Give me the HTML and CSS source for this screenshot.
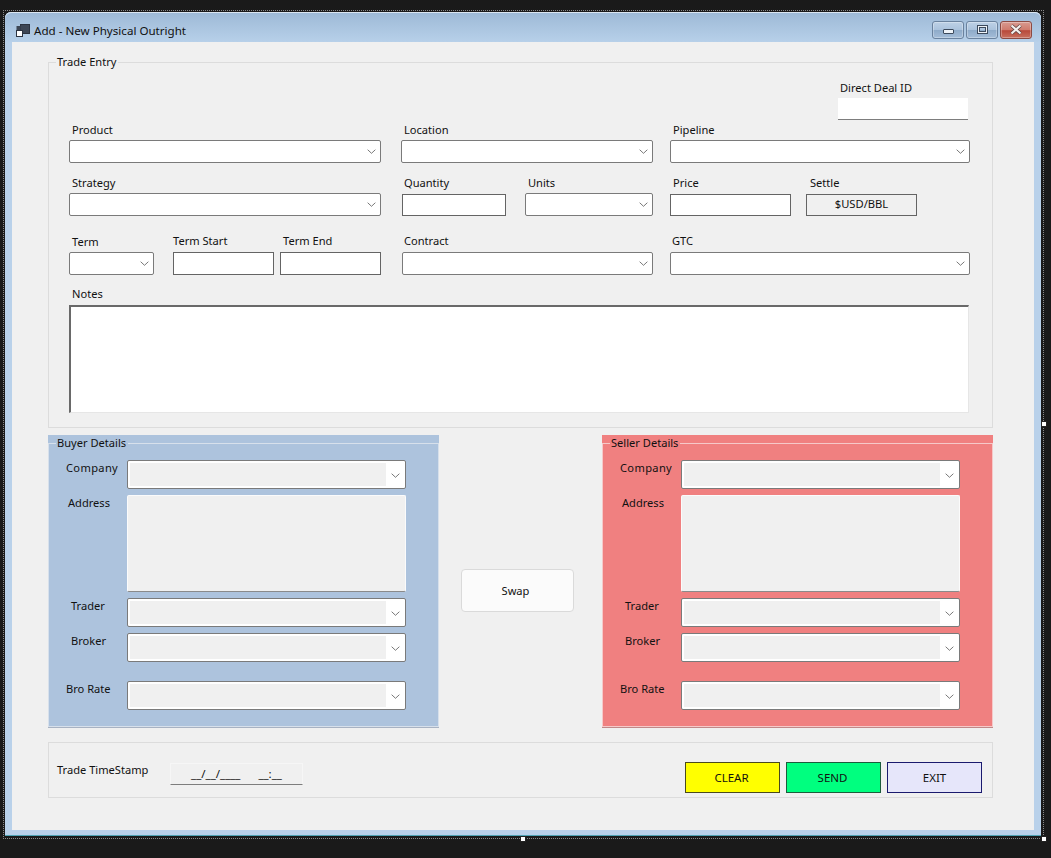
FILE: index.html
```html
<!DOCTYPE html>
<html lang="en">
<head>
<meta charset="utf-8">
<title>Add - New Physical Outright</title>
<link rel="stylesheet" href="styles.css">
</head>
<body>
<svg class="defs" width="0" height="0" aria-hidden="true">
  <symbol id="chev" viewBox="0 0 10 5"><path d="M0.7 0.5 L5 4.5 L9.3 0.5" fill="none" stroke="#6a6a6a" stroke-width="1"/></symbol>
</svg>
<div class="selection">
  <span class="handle handle-right"></span>
  <span class="handle handle-bottom"></span>
  <span class="handle handle-corner"></span>
  <div class="window">
    <header class="titlebar">
      <svg class="app-icon" width="14" height="13" viewBox="0 0 14 13">
        <rect x="4.5" y="0.5" width="9" height="9" fill="#3d4654" stroke="#2c3340"/>
        <rect x="0.5" y="6.5" width="6" height="6" fill="#fff" stroke="#2c3340"/>
        <rect x="0.5" y="2" width="4" height="4" fill="#3d4654"/>
      </svg>
      <span class="title">Add - New Physical Outright</span>
      <div class="caption-buttons">
        <div class="cap cap-min"><span class="glyph-min"></span></div>
        <div class="cap cap-max"><span class="glyph-max"></span></div>
        <div class="cap cap-close">
          <svg width="16" height="11" viewBox="0 0 16 11"><path d="M3.5 1.5 L12.5 9.5 M12.5 1.5 L3.5 9.5" stroke="#5a4040" stroke-width="3.6"/><path d="M3.5 1.5 L12.5 9.5 M12.5 1.5 L3.5 9.5" stroke="#f4f0ee" stroke-width="2.2"/></svg>
        </div>
      </div>
    </header>
    <main class="client">
      <section class="group trade">
        <span class="legend">Trade Entry</span>
        <div class="row row-direct">
          <div class="field w-130"><label class="lbl lbl-2">Direct Deal ID</label><input class="input input-flat" type="text"></div>
        </div>
        <div class="row row-1">
          <div class="field w-312"><label class="lbl">Product</label><div class="combo"><svg class="chev"><use href="#chev"/></svg></div></div>
          <div class="field w-252 ml-20"><label class="lbl">Location</label><div class="combo"><svg class="chev"><use href="#chev"/></svg></div></div>
          <div class="field w-300 ml-17"><label class="lbl">Pipeline</label><div class="combo"><svg class="chev"><use href="#chev"/></svg></div></div>
        </div>
        <div class="row row-2">
          <div class="field w-312"><label class="lbl">Strategy</label><div class="combo"><svg class="chev"><use href="#chev"/></svg></div></div>
          <div class="field w-104 ml-21"><label class="lbl lbl-2">Quantity</label><input class="input" type="text"></div>
          <div class="field w-128 ml-19"><label class="lbl">Units</label><div class="combo"><svg class="chev"><use href="#chev"/></svg></div></div>
          <div class="field w-121 ml-17"><label class="lbl">Price</label><input class="input" type="text"></div>
          <div class="field w-111 ml-15"><label class="lbl lbl-4">Settle</label><div class="settle">$USD/BBL</div></div>
        </div>
        <div class="row row-3">
          <div class="field w-85"><label class="lbl lbl-low">Term</label><div class="combo"><svg class="chev"><use href="#chev"/></svg></div></div>
          <div class="field w-101 ml-19"><label class="lbl lbl-0">Term Start</label><input class="input" type="text"></div>
          <div class="field w-101 ml-6"><label class="lbl">Term End</label><input class="input" type="text"></div>
          <div class="field w-251 ml-21"><label class="lbl lbl-2">Contract</label><div class="combo"><svg class="chev"><use href="#chev"/></svg></div></div>
          <div class="field w-300 ml-17"><label class="lbl lbl-2">GTC</label><div class="combo"><svg class="chev"><use href="#chev"/></svg></div></div>
        </div>
        <div class="notes">
          <label class="lbl">Notes</label>
          <textarea class="notes-box"></textarea>
        </div>
      </section>

      <div class="parties">
        <section class="panel panel-buyer">
          <div class="panel-frame">
            <span class="legend">Buyer Details</span>
            <div class="panel-grid">
              <span class="pl pl-company">Company</span>
              <div class="combo combo-tall"><span class="combo-fill"></span><svg class="chev"><use href="#chev"/></svg></div>
              <span class="pl pl-address">Address</span>
              <div class="address"></div>
              <span class="pl pl-trader">Trader</span>
              <div class="combo combo-tall"><span class="combo-fill"></span><svg class="chev"><use href="#chev"/></svg></div>
              <span class="pl pl-trader">Broker</span>
              <div class="combo combo-tall"><span class="combo-fill"></span><svg class="chev"><use href="#chev"/></svg></div>
              <span class="pl pl-rate">Bro Rate</span>
              <div class="combo combo-tall combo-rate"><span class="combo-fill"></span><svg class="chev"><use href="#chev"/></svg></div>
            </div>
          </div>
        </section>
        <button class="swap" type="button">Swap</button>
        <section class="panel panel-seller">
          <div class="panel-frame">
            <span class="legend">Seller Details</span>
            <div class="panel-grid">
              <span class="pl pl-company">Company</span>
              <div class="combo combo-tall"><span class="combo-fill"></span><svg class="chev"><use href="#chev"/></svg></div>
              <span class="pl pl-address">Address</span>
              <div class="address"></div>
              <span class="pl pl-trader">Trader</span>
              <div class="combo combo-tall"><span class="combo-fill"></span><svg class="chev"><use href="#chev"/></svg></div>
              <span class="pl pl-trader">Broker</span>
              <div class="combo combo-tall"><span class="combo-fill"></span><svg class="chev"><use href="#chev"/></svg></div>
              <span class="pl pl-rate">Bro Rate</span>
              <div class="combo combo-tall combo-rate"><span class="combo-fill"></span><svg class="chev"><use href="#chev"/></svg></div>
            </div>
          </div>
        </section>
      </div>

      <section class="group footer">
        <span class="ts-label">Trade TimeStamp</span>
        <div class="mask">__/__/____      __:__</div>
        <div class="actions">
          <button class="act act-clear" type="button">CLEAR</button>
          <button class="act act-send" type="button">SEND</button>
          <button class="act act-exit" type="button">EXIT</button>
        </div>
      </section>
    </main>
  </div>
</div>
</body>
</html>
```

FILE: styles.css
```css
* { box-sizing: border-box; }
html, body { margin: 0; height: 100%; }
body {
  background: #1a1a1a;
  font-family: "Noto Sans", "Open Sans", sans-serif;
  font-size: 11.1px;
  line-height: 15px;
  color: #111;
  overflow: hidden;
  padding: 10px 0 0 3px;
}
.defs { position: absolute; }

.selection {
  position: relative;
  width: 1041px;
  height: 829px;
  padding: 1px;
  border: 1px dotted #8a8a8a;
}
.handle {
  position: absolute;
  width: 6px;
  height: 6px;
  background: #fff;
  border: 1px solid #222;
}
.handle-right { right: -4px; top: 410px; }
.handle-bottom { left: 516px; bottom: -4px; }
.handle-corner { right: -4px; bottom: -4px; }

.window {
  width: 1036px;
  height: 824px;
  background: #b9d1ea;
  border-radius: 6px 6px 0 0;
  border-bottom: 1px solid #4fa3b5;
  padding: 0 7px 5px;
  display: flex;
  flex-direction: column;
}
.titlebar {
  height: 30px;
  margin: 0 -7px;
  padding: 7px 9px 0 11px;
  display: flex;
  align-items: center;
  background: linear-gradient(#9db9d6, #b7d0e9);
  border-radius: 6px 6px 0 0;
  flex: none;
  box-shadow: inset 0 1px 0 #dbe6f1;
}
.app-icon { margin-right: 5px; margin-top: -1px; }
.title { font-size: 11.6px; margin-top: -1px; margin-left: -1px; }
.caption-buttons { margin-left: auto; display: flex; gap: 2px; margin-top: -2px; }
.cap {
  width: 32px;
  height: 18px;
  border: 1px solid #6a829e;
  border-radius: 3px;
  display: flex;
  align-items: center;
  justify-content: center;
  background: linear-gradient(#bdd1e6 0, #aac2dc 50%, #8fabc9 52%, #a4bdd8 100%);
  box-shadow: inset 0 0 0 1px rgba(255,255,255,.3);
}
.cap-close {
  border-color: #8c4a42;
  background: linear-gradient(#d89a90 0, #cf7a6c 50%, #b8493a 54%, #c8705f 100%);
}
.glyph-min {
  width: 11px; height: 5px; margin-top: 3px;
  background: #eef3f8; border: 1px solid #3c4a5c; border-radius: 1px;
}
.glyph-max {
  width: 11px; height: 9px;
  background: transparent; border: 2px solid #eef3f8; outline: 1px solid #3c4a5c; outline-offset: -1px;
  box-shadow: inset 0 0 0 1px #3c4a5c;
}

.client {
  flex: 1;
  background: #f0f0f0;
  padding: 20px 41px 0 36px;
}

.group {
  position: relative;
  border: 1px solid #dcdcdc;
}
.legend {
  position: absolute;
  left: 7px;
  top: -9px;
  padding: 0 2px 0 1px;
  background: #f0f0f0;
  white-space: nowrap;
}

.trade { height: 366px; padding: 17px 0 0 20px; }
.row { display: flex; align-items: flex-start; }
.row-direct { padding-left: 769px; height: 42px; }
.row-2 { margin-top: 12px; }
.row-3 { margin-top: 17px; }

.field { display: flex; flex-direction: column; flex: none; }
.lbl { display: block; height: 18px; padding-left: 3px; white-space: nowrap; }
.lbl-0 { padding-left: 0; }
.lbl-2 { padding-left: 2px; }
.lbl-4 { padding-left: 4px; }
.row-3 .lbl { height: 19px; }
.lbl-low { padding-top: 1px; }

.w-85 { width: 85px; }
.w-101 { width: 101px; }
.w-104 { width: 104px; }
.w-111 { width: 111px; }
.w-121 { width: 121px; }
.w-128 { width: 128px; }
.w-130 { width: 130px; }
.w-251 { width: 251px; }
.w-252 { width: 252px; }
.w-300 { width: 300px; }
.w-312 { width: 312px; }
.ml-6 { margin-left: 6px; }
.ml-15 { margin-left: 15px; }
.ml-17 { margin-left: 17px; }
.ml-19 { margin-left: 19px; }
.ml-20 { margin-left: 20px; }
.ml-21 { margin-left: 21px; }

.input {
  display: block;
  width: 100%;
  height: 23px;
  margin: 0;
  padding: 0 3px;
  background: #fff;
  border: 1px solid #646464;
  border-radius: 0;
  font: inherit;
  outline: none;
}
.input-flat {
  height: 22px;
  border: 0;
  border-bottom: 1px solid #7d7d7d;
}
.combo {
  position: relative;
  height: 23px;
  background: #fff;
  border: 1px solid #7a7a7a;
  border-radius: 2px;
}
.chev {
  position: absolute;
  right: 4px;
  top: 8px;
  width: 9px;
  height: 5px;
}
.settle {
  height: 23px;
  background: #f0f0f0;
  border: 1px solid #646464;
  text-align: center;
  line-height: 17px;
  font-size: 11.2px;
}
.row-2 .input, .row-2 .settle { height: 22px; margin-top: 1px; }

.notes { margin-top: 11px; }
.notes .lbl { height: 19px; }
.notes-box {
  display: block;
  width: 900px;
  height: 108px;
  margin: 0;
  padding: 2px;
  background: #fff;
  border-style: solid;
  border-width: 2px 1px 1px 2px;
  border-color: #696969 #e6e6e6 #e6e6e6 #696969;
  border-radius: 0;
  resize: none;
  outline: none;
  font: inherit;
}

.parties {
  display: flex;
  align-items: flex-start;
  margin-top: 7px;
}
.panel {
  width: 391px;
  height: 293px;
  padding-top: 8px;
  flex: none;
  border-bottom: 1px solid #a8b2c2;
}
.panel-buyer { background: #adc3dd; }
.panel-seller { background: #f08080; border-bottom-color: #c08888; margin-left: auto; }
.panel-frame {
  position: relative;
  height: 100%;
  border: 1px solid #d7e0eb;
}
.panel-seller .panel-frame { border-color: #f6c9c9; }
.panel-buyer .legend { background: #adc3dd; }
.panel-seller .legend { background: #f08080; }
.panel-grid {
  display: grid;
  grid-template-columns: 78px 279px;
  row-gap: 6px;
  padding: 16px 0 0 0;
}
.pl { padding-left: 17px; white-space: nowrap; }
.pl-company { letter-spacing: 0.35px; }
.pl-address { padding-left: 19px; }
.pl-trader { padding-left: 22px; }
.pl-rate { padding-left: 17px; margin-top: 13px; }
.combo-tall { height: 29px; }
.combo-rate { margin-top: 13px; }
.combo-fill {
  position: absolute;
  left: 2px;
  top: 2px;
  right: 19px;
  bottom: 2px;
  background: #f0f0f0;
}
.combo-tall .chev { top: 12px; right: 5px; }
.address {
  height: 97px;
  background: #f0f0f0;
  border: 1px solid #fbfbfb;
  border-bottom: 1px solid #8a8a8a;
  border-radius: 2px;
}
.swap {
  width: 113px;
  height: 43px;
  margin: 134px 0 0 22px;
  background: #fbfbfb;
  border: 1px solid #dadada;
  border-radius: 4px;
  font: inherit;
  color: #111;
  padding: 0 4px 0 0;
}

.footer {
  height: 56px;
  margin-top: 14px;
  padding: 19px 10px 0 8px;
  display: flex;
  align-items: flex-start;
}
.ts-label { width: 113px; flex: none; white-space: nowrap; }
.mask {
  width: 133px;
  height: 22px;
  margin-top: 1px;
  background: #f0f0f0;
  border: 1px solid #f6f6f6;
  border-bottom: 1px solid #7d7d7d;
  text-align: center;
  white-space: pre;
  line-height: 20px;
  font-size: 11.5px;
}
.actions { margin-left: auto; display: flex; gap: 6px; }
.act {
  width: 95px;
  height: 31px;
  padding: 0 2px 0 0;
  font: inherit;
  font-size: 11.5px;
  color: #111;
  border: 1px solid #444;
  border-radius: 0;
}
.act-clear { background: #ffff00; border-color: #4a4a1c; }
.act-send { background: #00ff7f; border-color: #1c5c3c; }
.act-exit { background: #e6e6fa; border-color: #1a1a6e; padding: 0; }
```
